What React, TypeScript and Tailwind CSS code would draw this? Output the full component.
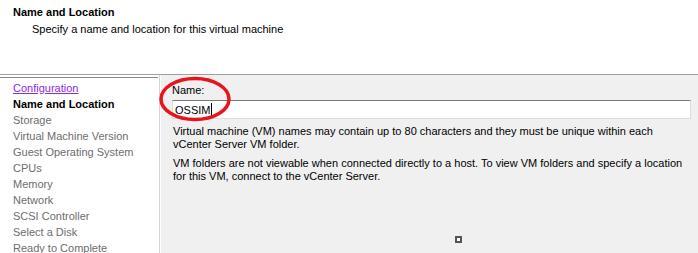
const steps = [
  'Storage',
  'Virtual Machine Version',
  'Guest Operating System',
  'CPUs',
  'Memory',
  'Network',
  'SCSI Controller',
  'Select a Disk',
  'Ready to Complete',
];

export default function App() {
  return (
    <div className="w-[698px] h-[253px] overflow-hidden bg-[#f0f0f0] text-[11px] text-black font-['Liberation_Sans',Arial,sans-serif]">
      {/* header */}
      <div className="h-[75px] bg-white border-b border-[#a0a0a0] pl-[13px] pt-[5px]">
        <div className="font-bold leading-[14px]">Name and Location</div>
        <div className="pl-[19px] mt-[3px] leading-[14px]">Specify a name and location for this virtual machine</div>
      </div>

      <div className="flex h-[178px]">
        {/* wizard steps */}
        <div className="w-[160px] shrink-0 bg-white pt-[2px] border-r border-[#d4d4d4]">
          <div className="border-t border-[#8a8a8a] w-[158px] pl-[13px] pt-[2px] leading-[16px]">
            <div className="text-[#8a2be2] underline">Configuration</div>
            <div className="font-bold">Name and Location</div>
            {steps.map((s) => (
              <div key={s} className="text-[#6d6d6d]">{s}</div>
            ))}
          </div>
        </div>

        {/* content */}
        <div className="relative flex-1 pl-[11px] pr-[7px] pt-[7px] border-l border-white">
          <div className="leading-[16px]">Name:</div>
          <div className="mt-[2px] h-[19px] bg-white border border-[#dcdcdc] border-t-[#7a7a7a] flex items-center pl-[2px]">
            <span className="leading-[14px]">OSSIM</span>
            <span className="w-px h-[13px] bg-black ml-px" />
          </div>
          <div className="mt-[6px] leading-[13px] pl-px">
            Virtual machine (VM) names may contain up to 80 characters and they must be unique within each
            <br />
            vCenter Server VM folder.
          </div>
          <div className="mt-[6px] leading-[13px] pl-px">
            VM folders are not viewable when connected directly to a host. To view VM folders and specify a location
            <br />
            for this VM, connect to the vCenter Server.
          </div>

          <div className="absolute left-[294px] top-[161px] w-[7px] h-[7px] bg-[#555] p-[2px]">
            <div className="w-full h-full bg-white" />
          </div>

          <svg className="absolute left-[-3px] top-[1px]" width="76" height="48" viewBox="0 0 76 48">
            <ellipse cx="37" cy="23" rx="34" ry="20.5" fill="none" stroke="#e8141c" strokeWidth="3.5" />
          </svg>
        </div>
      </div>
    </div>
  );
}
